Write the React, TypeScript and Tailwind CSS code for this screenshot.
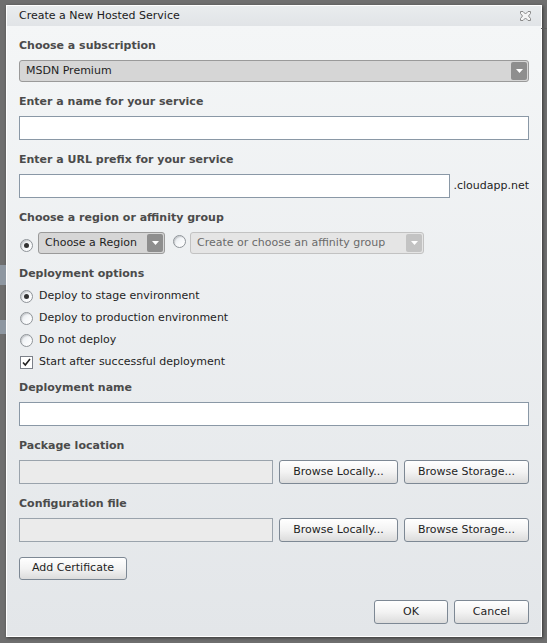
import React from "react";

const font = { fontFamily: '"DejaVu Sans", Verdana, sans-serif' };

function Label({ children, className = "" }: { children: React.ReactNode; className?: string }) {
  return (
    <div className={"h-4 leading-4 text-[11px] font-bold text-[#4b4b4b] " + className}>{children}</div>
  );
}

function Radio({ checked = false }: { checked?: boolean }) {
  return (
    <span className="relative inline-flex h-[13px] w-[13px] shrink-0 items-center justify-center rounded-full border border-[#8f9499] bg-gradient-to-br from-[#dfe3e8] via-[#f5f7f9] to-white shadow-[inset_1px_1px_1px_rgba(0,0,0,0.15)]">
      {checked && <span className="h-[5px] w-[5px] rounded-full bg-[#333]" />}
    </span>
  );
}

function Checkbox() {
  return (
    <span className="inline-flex h-[13px] w-[13px] shrink-0 items-center justify-center border border-[#7b8089] bg-white">
      <svg width="11" height="11" viewBox="0 0 11 11">
        <path d="M2 5.5 L4.3 8 L9 2" fill="none" stroke="#222" strokeWidth="1.6" />
      </svg>
    </span>
  );
}

function Arrow({ light = false }: { light?: boolean }) {
  return (
    <span
      className={
        "flex h-full w-[16px] items-center justify-center rounded-[2px] " +
        (light ? "bg-[#c3c3c3]" : "bg-[#8e8e8e]")
      }
    >
      <svg width="7" height="4" viewBox="0 0 7 4">
        <path d="M0 0 H7 L3.5 4 Z" fill="#fff" />
      </svg>
    </span>
  );
}

function Button({ children, className = "" }: { children: React.ReactNode; className?: string }) {
  return (
    <div
      className={
        "flex items-center justify-center rounded-[3px] border border-[#7d8894] bg-gradient-to-b from-white via-[#f3f3f3] to-[#dcdcdc] text-[11px] text-[#1e1e1e] " +
        className
      }
    >
      {children}
    </div>
  );
}

export default function App() {
  return (
    <div className="relative h-[643px] w-[547px] overflow-hidden bg-[#6f6f6f]" style={font}>
      {/* underlying page fragments */}
      <div className="absolute left-0 top-[265px] h-[20px] w-[6px] bg-[#8e97a1]" />
      <div className="absolute left-0 top-[320px] h-[14px] w-[6px] bg-[#8e97a1]" />
      <div className="absolute left-[541px] top-[28px] h-[1px] w-[6px] bg-[#5e5e5e]" />
      <div className="flex pl-[6px] pt-[5px]">
        <div className="flex h-[632px] w-[536px] flex-col border border-white shadow-[1px_1px_3px_rgba(0,0,0,0.5)]">
          {/* title */}
          <div className="flex h-[20px] items-center justify-between bg-gradient-to-b from-[#e9ecee] to-[#e1e4e7] pl-[12px] pr-[10px]">
            <span className="text-[11px] text-[#1b1b1b]">Create a New Hosted Service</span>
            <svg width="11" height="10" viewBox="0 0 11 10">
              <path
                d="M0.5 0.5 H3 L5.5 3 L8 0.5 H10.5 V2.5 L8.5 5 L10.5 7.5 V9.5 H8 L5.5 7 L3 9.5 H0.5 V7.5 L2.5 5 L0.5 2.5 Z"
                fill="#f4f4f4"
                stroke="#8a8a8a"
                strokeWidth="1"
              />
            </svg>
          </div>
          {/* body */}
          <div className="flex flex-1 flex-col bg-gradient-to-b from-[#f4f6f7] to-[#e3e6e9] pl-[12px] pr-[12px] pt-[12px]">
            <Label>Choose a subscription</Label>
            <div className="mt-[6px] flex h-[22px] items-center justify-between rounded-[3px] border border-[#9a9a9a] bg-[#d6d6d6] py-[1px] pl-[6px] pr-[1px]">
              <span className="text-[11px] text-[#1e1e1e]">MSDN Premium</span>
              <Arrow />
            </div>

            <Label className="mt-[12px]">Enter a name for your service</Label>
            <div className="mt-[6px] h-[24px] border border-[#8a98a6] bg-white" />

            <Label className="mt-[12px]">Enter a URL prefix for your service</Label>
            <div className="mt-[6px] flex h-[24px] items-center">
              <div className="h-full flex-1 border border-[#8a98a6] bg-white" />
              <span className="ml-[3px] text-[11px] text-[#1e1e1e]">.cloudapp.net</span>
            </div>

            <Label className="mt-[12px]">Choose a region or affinity group</Label>
            <div className="mt-[6px] flex h-[22px] items-center">
              <span className="ml-[1px]"><Radio checked /></span>
              <div className="ml-[5px] flex h-full w-[127px] items-center justify-between rounded-[3px] border border-[#9a9a9a] bg-[#d6d6d6] py-[1px] pl-[6px] pr-[1px]">
                <span className="text-[11px] text-[#1e1e1e]">Choose a Region</span>
                <Arrow />
              </div>
              <span className="ml-[8px]"><Radio /></span>
              <div className="ml-[4px] flex h-full w-[234px] items-center justify-between rounded-[3px] border border-[#c2c2c2] bg-[#e5e5e5] py-[1px] pl-[6px] pr-[1px]">
                <span className="text-[11px] text-[#6a6a6a]">Create or choose an affinity group</span>
                <Arrow light />
              </div>
            </div>

            <Label className="mt-[12px]">Deployment options</Label>
            <div className="mt-[3px] flex flex-col text-[11px] text-[#1e1e1e]">
              <div className="flex h-[22px] items-center gap-[6px] pl-[1px]"><Radio checked />Deploy to stage environment</div>
              <div className="flex h-[22px] items-center gap-[6px] pl-[1px]"><Radio />Deploy to production environment</div>
              <div className="flex h-[22px] items-center gap-[6px] pl-[1px]"><Radio />Do not deploy</div>
              <div className="flex h-[22px] items-center gap-[6px] pl-[1px]"><Checkbox />Start after successful deployment</div>
            </div>

            <Label className="mt-[7px]">Deployment name</Label>
            <div className="mt-[6px] h-[24px] border border-[#8a98a6] bg-white" />

            <Label className="mt-[12px]">Package location</Label>
            <div className="mt-[6px] flex h-[24px] gap-[6px]">
              <div className="h-full w-[254px] border border-[#9aa3ac] bg-[#ebebeb]" />
              <Button className="w-[119px]">Browse Locally...</Button>
              <Button className="flex-1">Browse Storage...</Button>
            </div>

            <Label className="mt-[12px]">Configuration file</Label>
            <div className="mt-[6px] flex h-[24px] gap-[6px]">
              <div className="h-full w-[254px] border border-[#9aa3ac] bg-[#ebebeb]" />
              <Button className="w-[119px]">Browse Locally...</Button>
              <Button className="flex-1">Browse Storage...</Button>
            </div>

            <div className="mt-[15px] flex">
              <Button className="h-[23px] w-[108px]">Add Certificate</Button>
            </div>

            <div className="mt-[20px] flex justify-end gap-[6px]">
              <Button className="h-[24px] w-[74px]">OK</Button>
              <Button className="h-[24px] w-[75px]">Cancel</Button>
            </div>
          </div>
        </div>
      </div>
    </div>
  );
}
